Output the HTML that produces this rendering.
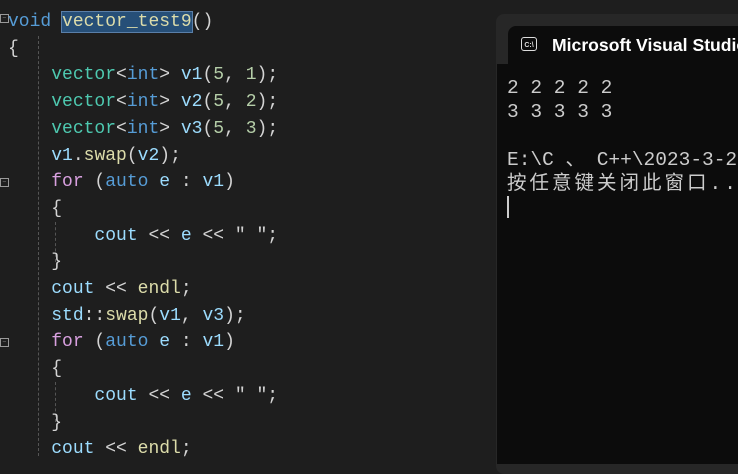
<!DOCTYPE html>
<html><head><meta charset="utf-8"><style>
body{margin:0;width:738px;height:454px;overflow:hidden;background:#1e1e1e;position:relative}
.ed{position:absolute;left:8px;top:9px;font-family:"Liberation Mono","Noto Sans CJK SC",monospace;font-size:18px;line-height:26.7px;color:#d4d4d4;white-space:pre;letter-spacing:0}
.t{color:#4ec9b0}.k{color:#569cd6}.v{color:#9cdcfe}.n{color:#b5cea8}.f{color:#dcdcaa}.c{color:#d8a0df}
.sel{background:#264f78;outline:1px solid #5a7fa8}
.gl{position:absolute;left:38px;top:36px;width:0;height:420px;border-left:1px dashed #555}
.gl2{position:absolute;left:55px;border-left:1px dashed #555;width:0;height:40px}
.fb{position:absolute;left:0;width:7px;height:7px;border:1px solid #999;font-size:7px;line-height:7px;color:#aaa;text-align:center}
.win{position:absolute;left:496px;top:14px;width:260px;height:460px;background:#272727;border-radius:8px}
.tab{position:absolute;left:508px;top:26px;width:240px;height:40px;background:#0c0c0c;border-radius:8px 0 0 0}
.con{position:absolute;left:497px;top:64px;width:250px;height:400px;background:#0c0c0c}
.ct{position:absolute;left:507px;top:76px;font-family:"Liberation Mono","Noto Sans CJK SC",monospace;font-size:19.5px;line-height:24px;color:#cccccc;white-space:pre}
.cj{letter-spacing:3px}
.tt{position:absolute;left:552px;top:35px;font-family:"Liberation Sans",sans-serif;font-size:17.6px;font-weight:bold;color:#fff;white-space:nowrap}
.ic{position:absolute;left:521px;top:37px;width:16px;height:14px;border:1.5px solid #ddd;border-radius:3px;font:bold 7px "Liberation Sans",sans-serif;color:#ddd;text-align:center;line-height:15px;box-sizing:border-box}
</style></head><body>
<div class="gl"></div>
<div class="gl2" style="top:222px"></div>
<div class="gl2" style="top:382px"></div>
<div class="fb" style="top:14px">−</div>
<div class="fb" style="top:178px">−</div>
<div class="fb" style="top:338px">−</div>
<div class="ed"><span class="k">void</span> <span class="f sel">vector_test9</span>()
{
    <span class="t">vector</span>&lt;<span class="k">int</span>&gt; <span class="v">v1</span>(<span class="n">5</span>, <span class="n">1</span>);
    <span class="t">vector</span>&lt;<span class="k">int</span>&gt; <span class="v">v2</span>(<span class="n">5</span>, <span class="n">2</span>);
    <span class="t">vector</span>&lt;<span class="k">int</span>&gt; <span class="v">v3</span>(<span class="n">5</span>, <span class="n">3</span>);
    <span class="v">v1</span>.<span class="f">swap</span>(<span class="v">v2</span>);
    <span class="c">for</span> (<span class="k">auto</span> <span class="v">e</span> : <span class="v">v1</span>)
    {
        <span class="v">cout</span> &lt;&lt; <span class="v">e</span> &lt;&lt; ″ ″;
    }
    <span class="v">cout</span> &lt;&lt; <span class="f">endl</span>;
    <span class="v">std</span>::<span class="f">swap</span>(<span class="v">v1</span>, <span class="v">v3</span>);
    <span class="c">for</span> (<span class="k">auto</span> <span class="v">e</span> : <span class="v">v1</span>)
    {
        <span class="v">cout</span> &lt;&lt; <span class="v">e</span> &lt;&lt; ″ ″;
    }
    <span class="v">cout</span> &lt;&lt; <span class="f">endl</span>;</div>
<div class="win"></div>
<div class="con"></div>
<div class="tab"></div>
<div class="ic">C:\</div>
<div class="tt">Microsoft Visual Studio</div>
<div class="ct">2 2 2 2 2
3 3 3 3 3

E:\C 、 C++\2023-3-22
<span class="cj">按任意键关闭此窗口...</span></div>
<div style="position:absolute;left:507px;top:196px;width:1.5px;height:22px;background:#ccc"></div>
</body></html>
